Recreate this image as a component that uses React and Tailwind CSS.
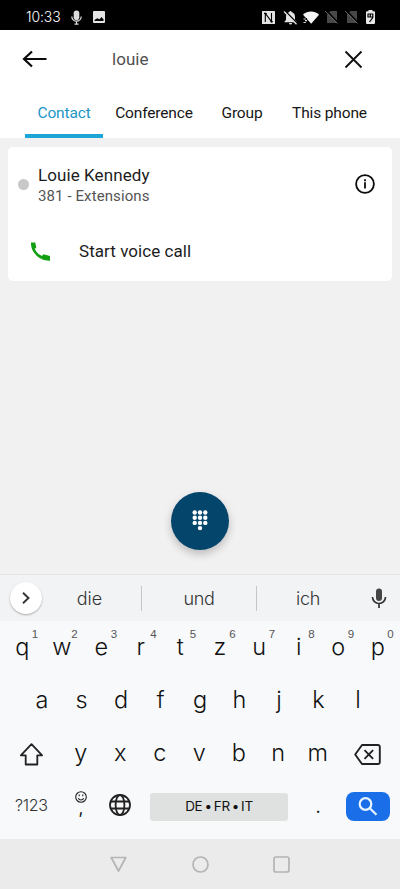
import clsx from 'clsx'

const tabs = [
  { label: 'Contact', width: 'w-[78px]', active: true },
  { label: 'Conference', width: 'w-[102px]' },
  { label: 'Group', width: 'w-[74px]' },
  { label: 'This phone', width: 'w-[101px]' },
]

const topRow = ['q', 'w', 'e', 'r', 't', 'z', 'u', 'i', 'o', 'p']
const homeRow = ['a', 's', 'd', 'f', 'g', 'h', 'j', 'k', 'l']
const bottomRow = ['y', 'x', 'c', 'v', 'b', 'n', 'm']

function StatusBar() {
  return (
    <div className="flex h-[30px] items-center bg-black pt-[4px] pl-[26px] text-white">
      <span className="w-[45px] font-['Inter'] text-[14px] leading-[16px] font-light tracking-[-0.1px]">10:33</span>
      <svg className="h-[15px] w-[11px]" viewBox="0 0 11 15">
        <rect x="2.7" y="0.5" width="5.600" height="9.500" rx="2.8" fill="#ddd" />
        <path d="M.8 6.500a4.700 4.700 0 0 0 9.400 0M5.500 11v3.500M3.500 14.200h4" fill="none" stroke="#ddd" strokeWidth="1.200" />
      </svg>
      <svg className="ml-[11px] h-[12px] w-[12px]" viewBox="0 0 12 12">
        <path fillRule="evenodd" fill="#e4e4e4" d="M1 0h10a1 1 0 0 1 1 1v10a1 1 0 0 1-1 1H1a1 1 0 0 1-1-1V1a1 1 0 0 1 1-1zM1.500 10h9V8.300L8.500 6 6.500 8.300 4.200 7.200 1.500 9z" />
      </svg>
      <svg className="ml-[157px] h-[13px] w-[13px]" viewBox="0 0 13 13">
        <rect width="13" height="13" rx="0.5" fill="#e4e4e4" />
        <path d="M3.300 11V2.300l6.200 8.400V2M4.800 2.500H2M8.300 10.700H11" fill="none" stroke="#000" strokeWidth="1.100" />
      </svg>
      <svg className="ml-[8px] h-[15px] w-[15px]" viewBox="0 0 15 15">
        <path d="M7.500 1c.7 0 1 .4 1 1 2.300.6 3.500 2.400 3.500 4.600V10l1.500 1.500v.7h-12v-.7L3 10V6.600C3 4.400 4.200 2.600 6.500 2c0-.6.300-1 1-1zM6 13h3a1.500 1.500 0 0 1-3 0z" fill="#e4e4e4" />
        <path d="M1.800 .8 14.800 14" stroke="#000" strokeWidth="1.600" />
        <path d="M1 1.500 13.500 14.200" stroke="#e4e4e4" strokeWidth="1.300" />
      </svg>
      <svg className="ml-[5px] h-[13px] w-[16px]" viewBox="0 0 16 13">
        <path d="M0 3.800C4.500-.6 11.500-.6 16 3.800L8.200 12.800z" fill="#f5f5f5" />
        <path d="M0 7h4v6H0z" fill="#000" />
        <path d="M.5 8h2.300M.5 11.500h2.300M2 9.700h2" stroke="#ddd" strokeWidth="1.200" />
      </svg>
      <NoSim className="ml-[6px]" />
      <NoSim className="ml-[7px]" />
      <svg className="ml-[8px] h-[14px] w-[9px]" viewBox="0 0 9 14">
        <path d="M2.500 0h4v1.200H8a1 1 0 0 1 1 1V13a1 1 0 0 1-1 1H1a1 1 0 0 1-1-1V2.200a1 1 0 0 1 1-1h1.500z" fill="#e8e8e8" />
        <path d="M2 4v3h4.800M4.300 4v3M6.800 4v3.500L3.500 12M1.500 4h5.800" fill="none" stroke="#000" strokeWidth="1.200" />
      </svg>
    </div>
  )
}

function NoSim({ className }) {
  return (
    <svg className={clsx('h-[14px] w-[13px]', className)} viewBox="0 0 13 14">
      <path d="M5.500 1H12v12H2V4.500z" fill="#484848" />
      <path d="M1 0l12 12.500" stroke="#000" strokeWidth="1.500" />
      <path d="M0 1l12.500 12.500" stroke="#666" strokeWidth="1" />
    </svg>
  )
}

function Header() {
  return (
    <header className="h-[108px] bg-white">
      <div className="flex h-[58px] items-center pl-[22px]">
        <svg className="h-[18px] w-[25px]" viewBox="0 0 25 18" fill="none" stroke="#0b0b0b" strokeWidth="2.200">
          <path d="M24.500 9H2M10 1.500 2 9l8 7.500" />
        </svg>
        <span className="ml-[65px] w-[232px] pt-[1px] text-[17px] tracking-[0.05px] text-[#505050]">louie</span>
        <svg className="h-[19px] w-[19px]" viewBox="0 0 19 19" stroke="#111" strokeWidth="1.900">
          <path d="M1.500 1.500l16 16M17.500 1.500l-16 16" />
        </svg>
      </div>
      <nav className="flex h-[50px] pl-[25px]">
        {tabs.map((t) => (
          <div
            key={t.label}
            className={clsx(
              'flex items-center justify-center border-b-4 pt-[6px] text-[15.500px] tracking-[-0.15px] whitespace-nowrap',
              t.width,
              t.active ? 'border-[#1da5d8] text-[#2196c5]' : 'border-transparent text-[#161616]',
            )}
          >
            {t.label}
          </div>
        ))}
      </nav>
    </header>
  )
}

function ContactCard() {
  return (
    <div className="mx-[8px] mt-[9px] h-[134px] rounded-[5px] bg-white">
      <div className="flex h-[74px] items-center pl-[10px]">
        <span className="h-[11px] w-[11px] rounded-full bg-[#c8c8c8]" />
        <div className="ml-[9px] w-[317px]">
          <div className="pt-[3px] text-[17px] leading-[21px] tracking-[0.08px] text-[#1c1c1c]">Louie Kennedy</div>
          <div className="text-[15px] leading-[20px] tracking-[0.1px] text-[#555]">381 - Extensions</div>
        </div>
        <svg className="h-[20px] w-[20px]" viewBox="0 0 20 20">
          <circle cx="10" cy="10" r="8.900" fill="none" stroke="#0c0c0c" strokeWidth="1.800" />
          <path d="M10 8.200v6.300M10 5.300v1.900" stroke="#0c0c0c" strokeWidth="1.800" />
        </svg>
      </div>
      <div className="flex h-[60px] items-center pt-[2px] pl-[23px]">
        <svg className="mb-[2px] h-[19px] w-[19px]" viewBox="0 0 19 19">
          <path d="M0 .4h4.200l1.100 5.100-1.500 1.400c1.600 3.200 3.900 5.500 7.100 7.100l1.700-1.700 6.400 1.800v4.600C8.500 19.200-.8 10 0 .4z" fill="#12a012" />
        </svg>
        <span className="ml-[29px] text-[17px] tracking-[0.05px] text-[#1c1c1c]">Start voice call</span>
      </div>
    </div>
  )
}

function DialButton() {
  const dots = [0, 1, 2, 3, 4, 5, 6, 7, 8, 10]
  return (
    <button type="button" className="flex h-[58px] w-[58px] items-center justify-center rounded-full bg-[#03456b] shadow-[0_4px_8px_rgba(0,0,0,0.22)]">
      <svg className="h-[22px] w-[16px]" viewBox="0 0 16 22" fill="#fff">
        {dots.map((n) => (
          <circle key={n} cx={2.7 + (n % 3) * 5.3} cy={2.5 + Math.floor(n / 3) * 5.2} r="2.200" />
        ))}
      </svg>
    </button>
  )
}

function Suggestions() {
  return (
    <div className="flex h-[47px] items-center border-t border-[#e4e5e6] bg-[#f1f3f4] pl-[10px] text-[18px] font-light text-[#333]">
      <div className="flex h-[32px] w-[32px] items-center justify-center rounded-full bg-white shadow-[0_1px_2px_rgba(0,0,0,0.3)]">
        <svg className="h-[12px] w-[8px]" viewBox="0 0 8 12" fill="none" stroke="#333" strokeWidth="1.900">
          <path d="M1 .8 6.500 6 1 11.200" />
        </svg>
      </div>
      <span className="w-[99px] pr-[4px] text-center">die</span>
      <span className="h-[25px] w-px bg-[#c4c6c8]" />
      <span className="w-[114px] text-center tracking-[-0.3px]">und</span>
      <span className="h-[25px] w-px bg-[#c4c6c8]" />
      <span className="w-[102px] text-center tracking-[-0.3px]">ich</span>
      <svg className="ml-[12px] h-[21px] w-[16px]" viewBox="0 0 16 21">
        <rect x="5" y="0.500" width="6" height="12.500" rx="3" fill="#454545" />
        <path d="M1.500 9a6.500 6.500 0 0 0 13 0M8 15.500V20" fill="none" stroke="#333" strokeWidth="1.700" />
      </svg>
    </div>
  )
}

function Key({ label, hint }) {
  return (
    <div className="relative flex h-full w-[39.500px] items-center justify-center">
      {label}
      {hint !== undefined && (
        <span className="absolute top-[6px] right-[2px] w-[10px] text-center font-['Liberation_Sans'] text-[11.500px] leading-[14px] font-normal text-[#555]">{hint}</span>
      )}
    </div>
  )
}

function Keyboard() {
  return (
    <div className="h-[218px] bg-[#f8f9fb] text-[23.500px] font-light text-[#111]">
      <div className="flex h-[52px] justify-center">
        {topRow.map((k, i) => (
          <Key key={k} label={k} hint={(i + 1) % 10} />
        ))}
      </div>
      <div className="flex h-[53px] justify-center">
        {homeRow.map((k) => (
          <Key key={k} label={k} />
        ))}
      </div>
      <div className="flex h-[53px] items-center pl-[20px]">
        <svg className="mt-[4px] h-[23px] w-[23px]" viewBox="0 0 23 23" fill="none" stroke="#222" strokeWidth="1.800" strokeLinejoin="round">
          <path d="M11.500 1.200.900 12.300H5.700v9.200h11.600v-9.200h4.800z" />
        </svg>
        <div className="ml-[18px] flex h-full">
          {bottomRow.map((k) => (
            <Key key={k} label={k} />
          ))}
        </div>
        <svg className="mt-[4px] ml-[16px] h-[21px] w-[27px]" viewBox="0 0 27 21" fill="none" stroke="#222" strokeWidth="1.900" strokeLinejoin="round">
          <path d="M8 1h16a1.800 1.800 0 0 1 1.800 1.800v15.400A1.800 1.800 0 0 1 24 20H8L1.200 10.500zM10.500 6.200l8.600 8.600M19.100 6.200l-8.600 8.600" />
        </svg>
      </div>
      <div className="flex h-[56px] items-center pb-[1px] pl-[15px]">
        <span className="w-[60px] pb-[4px] text-[16px] tracking-[-0.300px] text-[#333]">?123</span>
        <div className="flex w-[12px] flex-col items-center pb-[6px]">
          <svg className="h-[12px] w-[12px]" viewBox="0 0 12 12" fill="none" stroke="#222">
            <circle cx="6" cy="6" r="5.300" strokeWidth="1.100" />
            <path d="M3.300 7.300a3 3 0 0 0 5.400 0M4.200 3.600v1.600M7.800 3.600v1.600" strokeWidth="1.100" />
          </svg>
          <span className="h-[14px] text-[17px] leading-[10px] font-normal">,</span>
        </div>
        <svg className="mb-[4px] ml-[22px] h-[22px] w-[22px]" viewBox="0 0 22 22" fill="none" stroke="#222" strokeWidth="1.800">
          <circle cx="11" cy="11" r="10" />
          <ellipse cx="11" cy="11" rx="4.400" ry="10" />
          <path d="M2 7.500h18M2 14.500h18" />
        </svg>
        <div className="ml-[19px] flex h-[28px] w-[138px] items-center justify-center gap-[2px] rounded-[3px] bg-[#dfe1e1] text-[13.500px] font-normal tracking-[-0.3px]">
          <span>DE</span>
          <span>•</span>
          <span>FR</span>
          <span>•</span>
          <span>IT</span>
        </div>
        <span className="w-[58px] pl-[2px] text-center text-[18px] font-normal">.</span>
        <div className="flex h-[29px] w-[44px] items-center justify-center rounded-[8px] bg-[#1a6fe8]">
          <svg className="h-[19px] w-[20px]" viewBox="0 0 20 19" fill="none" stroke="#e8f4ff" strokeWidth="2.200">
            <circle cx="7.500" cy="7" r="5.800" />
            <path d="M11.800 11.300l6.700 6.500" />
          </svg>
        </div>
      </div>
    </div>
  )
}

function NavBar() {
  return (
    <div className="flex h-[50px] items-center justify-between bg-[#ebebeb] px-[110px]">
      <svg className="h-[17px] w-[17px]" viewBox="0 0 17 17" fill="none" stroke="#b4b4b4" strokeWidth="1.700" strokeLinejoin="round">
        <path d="M1.200 1.500h14.600L8.500 15z" />
      </svg>
      <svg className="h-[17px] w-[17px]" viewBox="0 0 17 17" fill="none" stroke="#b4b4b4" strokeWidth="1.700">
        <circle cx="8.500" cy="8.500" r="7.500" />
      </svg>
      <svg className="h-[17px] w-[17px]" viewBox="0 0 17 17" fill="none" stroke="#b4b4b4" strokeWidth="1.700">
        <rect x="1" y="1" width="15" height="15" rx="2" />
      </svg>
    </div>
  )
}

export default function App() {
  return (
    <div className="flex h-[889px] w-[400px] flex-col overflow-hidden bg-[#f1f1f1] font-['Roboto',sans-serif]">
      <StatusBar />
      <Header />
      <main className="flex flex-1 flex-col">
        <ContactCard />
        <div className="mt-auto flex justify-center pb-[24px]">
          <DialButton />
        </div>
      </main>
      <div className="font-['Inter',sans-serif]">
        <Suggestions />
        <Keyboard />
      </div>
      <NavBar />
    </div>
  )
}
